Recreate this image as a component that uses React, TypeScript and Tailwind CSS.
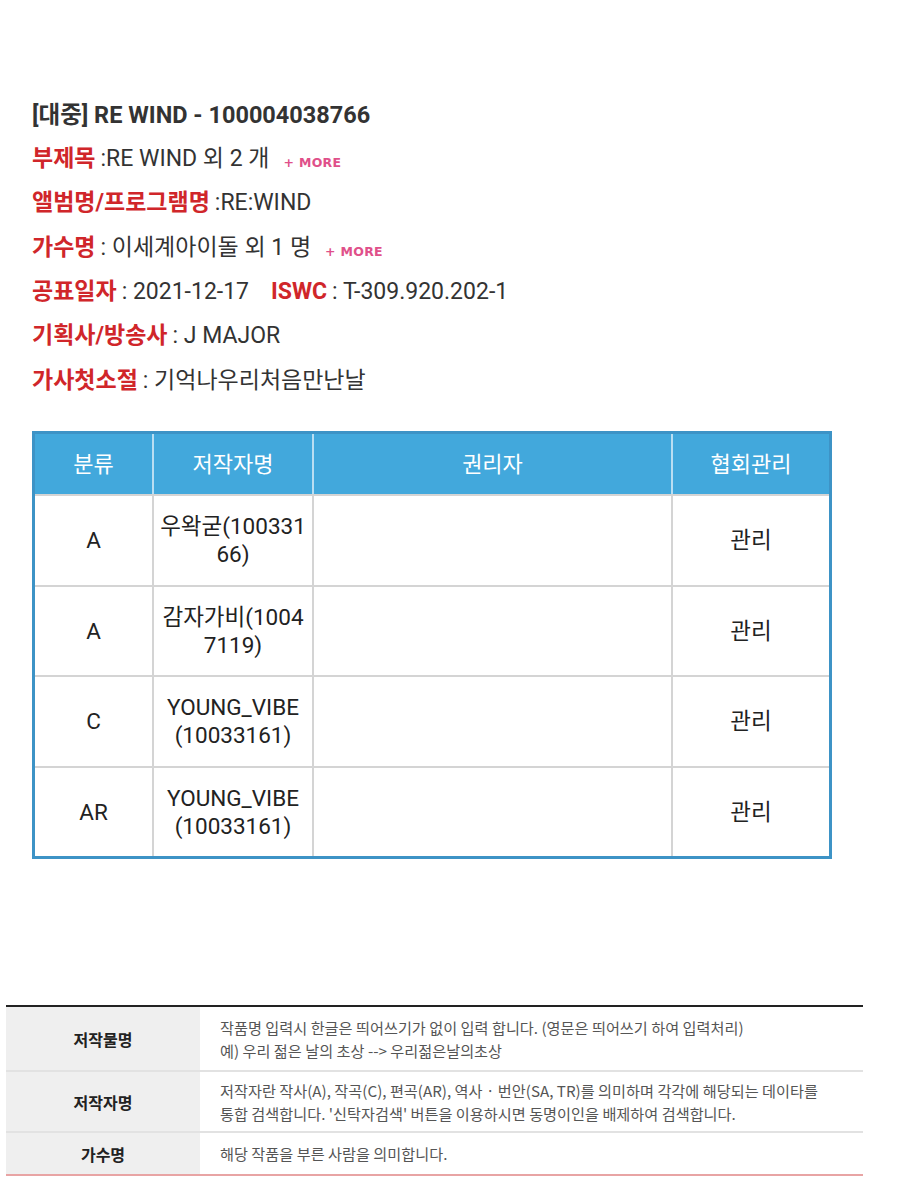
import React from 'react';

type Info = { label: string; value: string; more?: boolean };

const infoRows: Info[] = [
  { label: '부제목', value: ':RE WIND 외 2 개', more: true },
  { label: '앨범명/프로그램명', value: ':RE:WIND' },
  { label: '가수명', value: ': 이세계아이돌 외 1 명', more: true },
];

const infoRowsAfter: Info[] = [
  { label: '기획사/방송사', value: ': J MAJOR' },
  { label: '가사첫소절', value: ': 기억나우리처음만난날' },
];

const writers = [
  { type: 'A', name: '우왁굳(10033166)', breakAll: true },
  { type: 'A', name: '감자가비(10047119)', breakAll: true },
  { type: 'C', name: 'YOUNG_VIBE (10033161)', breakAll: false },
  { type: 'AR', name: 'YOUNG_VIBE (10033161)', breakAll: false },
];

const guide = [
  {
    label: '저작물명',
    lines: ['작품명 입력시 한글은 띄어쓰기가 없이 입력 합니다. (영문은 띄어쓰기 하여 입력처리)', '예) 우리 젊은 날의 초상 --> 우리젊은날의초상'],
    h: 'h-[63px]',
  },
  {
    label: '저작자명',
    lines: ['저작자란 작사(A), 작곡(C), 편곡(AR), 역사 · 번안(SA, TR)를 의미하며 각각에 해당되는 데이타를', "통합 검색합니다. '신탁자검색' 버튼을 이용하시면 동명이인을 배제하여 검색합니다."],
    h: 'h-[61px]',
  },
  {
    label: '가수명',
    lines: ['해당 작품을 부른 사람을 의미합니다.'],
    h: 'h-[43px]',
  },
];

const More = () => (
  <span className="ml-[14px] mt-[8px] text-[12.5px] font-black tracking-[0.3px] text-[#e0508a]" style={{ fontFamily: '"DejaVu Sans", sans-serif' }}>
    + MORE
  </span>
);

const InfoLine: React.FC<{ row: Info }> = ({ row }) => (
  <div className="flex h-[44.3px] items-center text-[23px]">
    <span className="font-bold text-[#d0262a]">{row.label}</span>
    <span className="ml-[5px] text-[#333]">{row.value}</span>
    {row.more && <More />}
  </div>
);

export default function App() {
  return (
    <div className="min-h-[1179px] w-[900px] bg-white" style={{ fontFamily: 'Roboto, "Noto Sans CJK KR", sans-serif' }}>
      <div className="pl-[32px] pt-[93px]">
        <div className="flex h-[44.3px] items-center text-[23.5px] font-bold text-[#333]">[대중] RE WIND - 100004038766</div>
        {infoRows.map((r) => (
          <InfoLine key={r.label} row={r} />
        ))}
        <div className="flex h-[44.3px] items-center text-[23px]">
          <span className="font-bold text-[#d0262a]">공표일자</span>
          <span className="ml-[5px] text-[#333]">: 2021-12-17</span>
          <span className="ml-[22px] font-bold text-[#d0262a]">ISWC</span>
          <span className="ml-[5px] text-[#333]">: T-309.920.202-1</span>
        </div>
        {infoRowsAfter.map((r) => (
          <InfoLine key={r.label} row={r} />
        ))}
      </div>

      <div className="ml-[32px] mt-[28px] w-[800px] border-[3px] border-[#3d93c6]">
        <div className="grid h-[60px] grid-cols-[117px_160px_359px_1fr] bg-[#42a8dc] text-[22px] text-white">
          <div className="flex items-center justify-center">분류</div>
          <div className="flex items-center justify-center border-l-2 border-[#b9def2]">저작자명</div>
          <div className="flex items-center justify-center border-l-2 border-[#b9def2]">권리자</div>
          <div className="flex items-center justify-center border-l-2 border-[#b9def2]">협회관리</div>
        </div>
        {writers.map((w, i) => (
          <div key={i} className="grid h-[90.5px] grid-cols-[117px_160px_359px_1fr] border-t-2 border-[#d4d4d4] text-[22.5px] leading-[28px] text-[#222]">
            <div className="flex items-center justify-center">{w.type}</div>
            <div className={`flex items-center justify-center border-l-2 border-[#d4d4d4] px-[4px] text-center ${w.breakAll ? 'break-all' : ''}`}>{w.name}</div>
            <div className="border-l-2 border-[#d4d4d4]"></div>
            <div className="flex items-center justify-center border-l-2 border-[#d4d4d4]">관리</div>
          </div>
        ))}
      </div>

      <div className="ml-[6px] mt-[146px] w-[857px] border-t-2 border-b-2 border-t-[#222] border-b-[#e8a4a4]" style={{ fontFamily: '"Noto Sans CJK KR", sans-serif' }}>
        {guide.map((g, i) => (
          <div key={g.label} className={`flex ${g.h} ${i > 0 ? 'border-t-2 border-[#e2e2e2]' : ''}`}>
            <div className="flex w-[194px] shrink-0 items-center justify-center bg-[#efefef] text-[16px] font-bold text-[#222]">{g.label}</div>
            <div className="flex flex-col justify-center pl-[20px] text-[15.2px] leading-[23px] text-[#555]">
              {g.lines.map((l) => (
                <div key={l}>{l}</div>
              ))}
            </div>
          </div>
        ))}
      </div>
    </div>
  );
}
